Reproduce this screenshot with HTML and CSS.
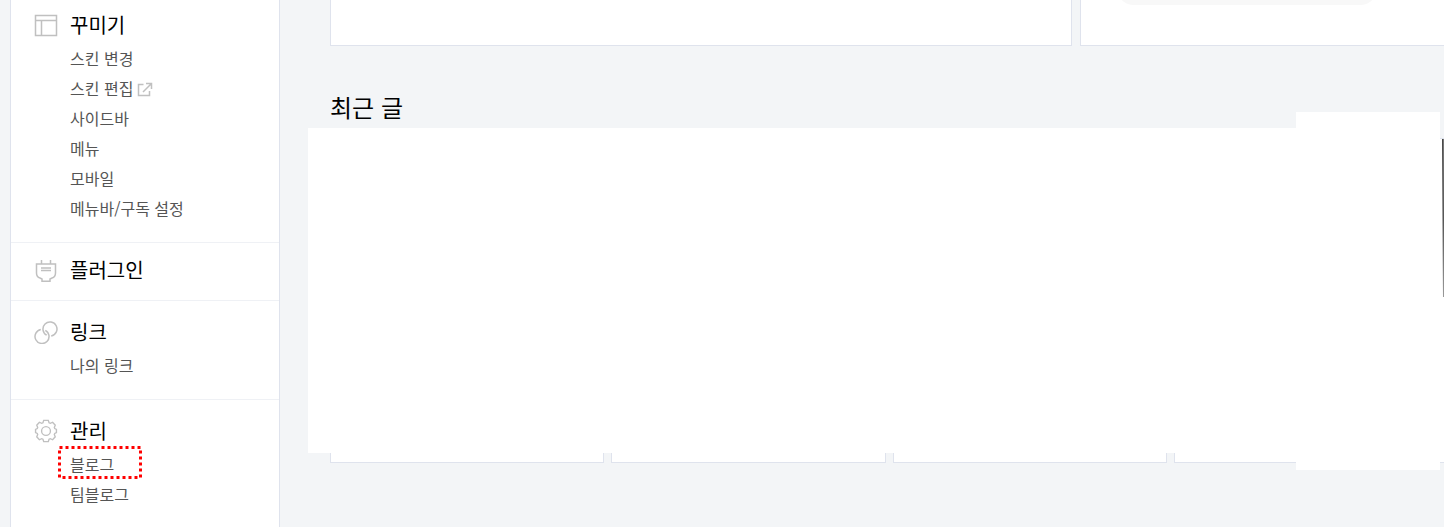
FILE: index.html
```html
<!DOCTYPE html>
<html lang="ko">
<head>
<meta charset="UTF-8">
<meta name="viewport" content="width=device-width, initial-scale=1.0">
<title>블로그 관리</title>
<link rel="stylesheet" href="styles.css">
</head>
<body>
<div class="wrap">
    <nav class="sidebar">
        <section class="menu menu-first">
            <h2 class="menu-title">
                <svg class="icon" viewBox="0 0 24 24"><path d="M1.500 2.500h21v20h-21zM1.500 7.500h21M7.500 7.500v15"/></svg>
                <a href="#">꾸미기</a>
            </h2>
            <ul class="menu-list">
                <li><a href="#">스킨 변경</a></li>
                <li><a href="#">스킨 편집<svg class="icon-ext" viewBox="0 0 16 16"><path d="M6.500 2.500H1.500v11h11V9M9 1.500h5.500V7M14 2L6 10"/></svg></a></li>
                <li><a href="#">사이드바</a></li>
                <li><a href="#">메뉴</a></li>
                <li><a href="#">모바일</a></li>
                <li><a href="#">메뉴바/구독 설정</a></li>
            </ul>
        </section>
        <section class="menu menu-single">
            <h2 class="menu-title">
                <svg class="icon" viewBox="0 0 24 24"><path d="M7.500 2v4M16.500 2v4M2.500 6h19v9c0 3-1.500 4.500-3.500 5l-2 1v2.200H8v-2.200l-2-1c-2-.5-3.500-2-3.500-5zM7 10h10M7 12.500h10"/></svg>
                <a href="#">플러그인</a>
            </h2>
        </section>
        <section class="menu">
            <h2 class="menu-title">
                <svg class="icon" viewBox="0 0 24 24"><path d="M11.300 10.300A7 7 0 1 1 6.800 9.600M12.700 15.200A7 7 0 1 1 17.200 15.900"/></svg>
                <a href="#">링크</a>
            </h2>
            <ul class="menu-list">
                <li><a href="#">나의 링크</a></li>
            </ul>
        </section>
        <section class="menu">
            <h2 class="menu-title">
                <svg class="icon" viewBox="-1 0 26 26"><path d="M9.500 1.500h5l.8 2.600 1.400.6 2.500-1.200 2.800 3.200-1 2.400.5 1.300 1.800.8v3.600l-1.800.8-.5 1.300 1 2.400-2.800 3.200-2.500-1.200-1.400.6-.8 2.600h-5l-.8-2.600-1.400-.6-2.500 1.200L2 19.300l1-2.400-.5-1.300-1.800-.8v-3.600l1.800-.8.5-1.300-1-2.400 2.800-3.200 2.500 1.200 1.400-.6z"/><circle cx="12" cy="13" r="4.800"/></svg>
                <a href="#">관리</a>
            </h2>
            <ul class="menu-list">
                <li class="marked">
                    <a href="#">블로그</a>
                    <svg class="marker" viewBox="0 0 84 33"><rect x="1.500" y="1.500" width="81" height="30"/></svg>
                </li>
                <li><a href="#">팀블로그</a></li>
            </ul>
        </section>
    </nav>
    <main class="content">
        <div class="summary">
            <div class="panel"></div>
            <div class="panel"><div class="pill"></div></div>
        </div>
        <section class="recent">
            <h2 class="recent-title">최근 글</h2>
            <div class="cards">
                <div class="card"></div>
                <div class="card"></div>
                <div class="card"></div>
                <div class="card"><div class="thumb"></div></div>
            </div>
            <div class="cover cover-wide"></div>
            <div class="cover cover-side"></div>
        </section>
    </main>
</div>
</body>
</html>
```
FILE: styles.css
```css
body {
    margin: 0;
    background-color: #f3f5f7;
    font-family: "Noto Sans CJK KR", sans-serif;
    color: #000;
}
a {
    color: inherit;
    text-decoration: none;
}
.wrap {
    display: flex;
    min-height: 100vh;
    overflow: hidden;
}

/* Sidebar */
.sidebar {
    flex: none;
    width: 270px;
    margin-left: 10px;
    box-sizing: border-box;
    border: 1px solid #dfe3ed;
    border-width: 0 1px;
    background-color: #fff;
}
.menu {
    padding: 16px 24px 19px 23px;
    border-top: 1px solid #eff1f5;
}
.menu-first {
    padding-top: 10px;
    border-top: none;
}
.menu-single {
    padding-top: 12px;
    padding-bottom: 15px;
}
.menu-title {
    display: flex;
    align-items: center;
    gap: 12px;
    margin: 0;
    font-size: 20px;
    font-weight: 400;
    line-height: 30px;
}
.icon {
    width: 24px;
    height: 24px;
    fill: none;
    stroke: #c0c0c0;
    stroke-width: 1.5;
}
.icon-ext {
    width: 16px;
    height: 16px;
    margin-left: 4px;
    vertical-align: -3px;
    fill: none;
    stroke: #c0c0c0;
    stroke-width: 1.5;
}
.menu-list {
    margin: 3px 0 0;
    padding: 0 0 0 36px;
    list-style: none;
    font-size: 16px;
    line-height: 30px;
    color: #555;
}
.menu-list li {
    height: 30px;
}
.marked {
    position: relative;
}
.marker {
    position: absolute;
    left: -12px;
    top: -3px;
    width: 84px;
    height: 33px;
    fill: none;
    stroke: #f00;
    stroke-width: 3;
    stroke-dasharray: 3 3;
}

/* Content */
.content {
    flex: 1;
    min-width: 0;
    margin-right: -4px;
    padding-left: 50px;
}
.summary {
    display: grid;
    grid-template-columns: 1fr 368px;
    gap: 8px;
}
.panel {
    height: 45px;
    overflow: hidden;
    border: 1px solid #dfe3ed;
    border-top: none;
    background-color: #fff;
}
.pill {
    height: 36px;
    margin: -31px 69px 0 35px;
    border-radius: 18px;
    background-color: #f8f8f8;
}
.recent {
    position: relative;
    padding-top: 43px;
}
.recent-title {
    margin: 0 0 13px;
    font-size: 24px;
    font-weight: 400;
    line-height: 36px;
}
.cards {
    display: grid;
    grid-template-columns: repeat(4, 1fr);
    gap: 7px;
}
.card {
    height: 323px;
    border: 1px solid #dfe3ed;
    background-color: #fff;
}
.thumb {
    width: 5px;
    height: 158px;
    margin-left: auto;
    background: linear-gradient(#444, #bbb 60%, #fff) 0 0 / 1px 100% no-repeat,
        linear-gradient(#777, #555 50%, #999);
}

/* Blank areas over the cards */
.cover {
    position: absolute;
    background-color: #fff;
}
.cover-wide {
    top: 82px;
    left: -22px;
    right: 8px;
    height: 325px;
}
.cover-side {
    top: 66px;
    right: 8px;
    width: 144px;
    height: 358px;
}
```
